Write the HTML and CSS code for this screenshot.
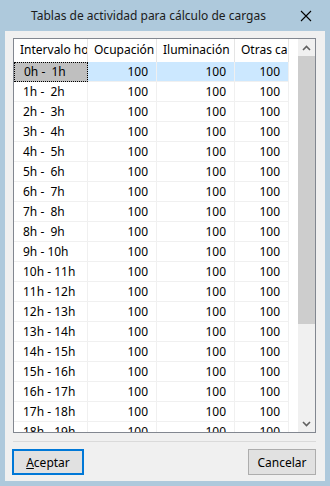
FILE: index.html
```html
<!DOCTYPE html>
<html lang="es">

<head>
    <meta charset="UTF-8">
    <meta name="viewport" content="width=device-width, initial-scale=1.0">
    <title>Tablas de actividad</title>
    <link rel="stylesheet" href="styles.css">
</head>

<body>
    <div class="window">
        <div class="titlebar">
            <span class="title">Tablas de actividad para cálculo de cargas</span>
            <svg class="close" width="12" height="12" viewBox="0 0 12 12">
                <path d="M1 1L11 11M11 1L1 11" stroke="#000" stroke-width="1.1" fill="none" />
            </svg>
        </div>

        <div class="client">
            <div class="grid">
                <div class="table">
                    <div class="row head">
                        <div class="cell">Intervalo horario</div>
                        <div class="cell">Ocupación</div>
                        <div class="cell">Iluminación</div>
                        <div class="cell">Otras cargas</div>
                    </div>
                    <div class="rows">
                        <div class="row selected">
                            <div class="cell focus">0h -  1h</div>
                            <div class="cell num">100</div>
                            <div class="cell num">100</div>
                            <div class="cell num">100</div>
                        </div>
                        <div class="row">
                            <div class="cell">1h -  2h</div>
                            <div class="cell num">100</div>
                            <div class="cell num">100</div>
                            <div class="cell num">100</div>
                        </div>
                        <div class="row">
                            <div class="cell">2h -  3h</div>
                            <div class="cell num">100</div>
                            <div class="cell num">100</div>
                            <div class="cell num">100</div>
                        </div>
                        <div class="row">
                            <div class="cell">3h -  4h</div>
                            <div class="cell num">100</div>
                            <div class="cell num">100</div>
                            <div class="cell num">100</div>
                        </div>
                        <div class="row">
                            <div class="cell">4h -  5h</div>
                            <div class="cell num">100</div>
                            <div class="cell num">100</div>
                            <div class="cell num">100</div>
                        </div>
                        <div class="row">
                            <div class="cell">5h -  6h</div>
                            <div class="cell num">100</div>
                            <div class="cell num">100</div>
                            <div class="cell num">100</div>
                        </div>
                        <div class="row">
                            <div class="cell">6h -  7h</div>
                            <div class="cell num">100</div>
                            <div class="cell num">100</div>
                            <div class="cell num">100</div>
                        </div>
                        <div class="row">
                            <div class="cell">7h -  8h</div>
                            <div class="cell num">100</div>
                            <div class="cell num">100</div>
                            <div class="cell num">100</div>
                        </div>
                        <div class="row">
                            <div class="cell">8h -  9h</div>
                            <div class="cell num">100</div>
                            <div class="cell num">100</div>
                            <div class="cell num">100</div>
                        </div>
                        <div class="row">
                            <div class="cell">9h - 10h</div>
                            <div class="cell num">100</div>
                            <div class="cell num">100</div>
                            <div class="cell num">100</div>
                        </div>
                        <div class="row">
                            <div class="cell">10h - 11h</div>
                            <div class="cell num">100</div>
                            <div class="cell num">100</div>
                            <div class="cell num">100</div>
                        </div>
                        <div class="row">
                            <div class="cell">11h - 12h</div>
                            <div class="cell num">100</div>
                            <div class="cell num">100</div>
                            <div class="cell num">100</div>
                        </div>
                        <div class="row">
                            <div class="cell">12h - 13h</div>
                            <div class="cell num">100</div>
                            <div class="cell num">100</div>
                            <div class="cell num">100</div>
                        </div>
                        <div class="row">
                            <div class="cell">13h - 14h</div>
                            <div class="cell num">100</div>
                            <div class="cell num">100</div>
                            <div class="cell num">100</div>
                        </div>
                        <div class="row">
                            <div class="cell">14h - 15h</div>
                            <div class="cell num">100</div>
                            <div class="cell num">100</div>
                            <div class="cell num">100</div>
                        </div>
                        <div class="row">
                            <div class="cell">15h - 16h</div>
                            <div class="cell num">100</div>
                            <div class="cell num">100</div>
                            <div class="cell num">100</div>
                        </div>
                        <div class="row">
                            <div class="cell">16h - 17h</div>
                            <div class="cell num">100</div>
                            <div class="cell num">100</div>
                            <div class="cell num">100</div>
                        </div>
                        <div class="row">
                            <div class="cell">17h - 18h</div>
                            <div class="cell num">100</div>
                            <div class="cell num">100</div>
                            <div class="cell num">100</div>
                        </div>
                        <div class="row">
                            <div class="cell">18h - 19h</div>
                            <div class="cell num">100</div>
                            <div class="cell num">100</div>
                            <div class="cell num">100</div>
                        </div>
                        <div class="row">
                            <div class="cell">19h - 20h</div>
                            <div class="cell num">100</div>
                            <div class="cell num">100</div>
                            <div class="cell num">100</div>
                        </div>
                    </div>
                </div>

                <!-- barra de desplazamiento -->
                <div class="scroll">
                    <div class="arrow">
                        <svg width="9" height="6" viewBox="0 0 9 6">
                            <path d="M1 5L4.5 1.5L8 5" stroke="#606060" stroke-width="1.6" fill="none" />
                        </svg>
                    </div>
                    <div class="track">
                        <div class="thumb"></div>
                    </div>
                    <div class="arrow">
                        <svg width="9" height="6" viewBox="0 0 9 6">
                            <path d="M1 1L4.5 4.5L8 1" stroke="#606060" stroke-width="1.6" fill="none" />
                        </svg>
                    </div>
                </div>
            </div>

            <div class="buttons">
                <button class="btn default"><u>A</u>ceptar</button>
                <button class="btn">Cancelar</button>
            </div>
        </div>
    </div>
</body>

</html>
```

FILE: styles.css
```css
* {
    margin: 0px;
    padding: 0px;
    box-sizing: border-box;
}

body {
    font-family: "Noto Sans", "Liberation Sans", sans-serif;
    font-size: 12px;
    color: #000;
}
/*
 * ventana
 */

.window {
    width: 330px;
    height: 486px;
    background-color: #aec9dc;
    display: flex;
    flex-direction: column;
    padding: 0 5px 5px 5px;
}

.titlebar {
    height: 31px;
    display: flex;
    align-items: center;
    padding-left: 26px;
    padding-right: 13px;
}

.title {
    flex: 1;
    color: #1b1b1b;
}

.close {
    display: block;
}

.client {
    flex: 1;
    background-color: #f0f0f0;
    display: flex;
    flex-direction: column;
    padding: 7px 9px 0 8px;
}
/*
 * tabla
 */

.grid {
    height: 395px;
    border: 1px solid #828790;
    background-color: #fff;
    display: flex;
}

.table {
    flex: 1;
    overflow: hidden;
}

.row {
    display: grid;
    grid-template-columns: 74px 69px 78px 54px;
    height: 20px;
    line-height: 19px;
}

.row .cell {
    white-space: pre;
    overflow: hidden;
    padding-left: 9px;
    border-right: 1px solid #f0f0f0;
    border-bottom: 1px solid #f0f0f0;
}

.row .num {
    text-align: right;
    padding-left: 0;
    padding-right: 8px;
}

.head {
    height: 23px;
    line-height: 22px;
}

.head .cell {
    padding-left: 6px;
    border-bottom: none;
    border-right: 1px solid #e5e5e5;
}

.rows {
    height: 370px;
    overflow: hidden;
}

.selected .cell {
    background-color: #cce8ff;
}

.selected .focus {
    background-color: #bfbfbf;
    border: 1px dotted #000;
    line-height: 17px;
    padding-left: 9px;
}
/*
 * scroll
 */

.scroll {
    width: 17px;
    background-color: #f0f0f0;
    display: flex;
    flex-direction: column;
}

.arrow {
    height: 17px;
    display: flex;
    align-items: center;
    justify-content: center;
}

.track {
    flex: 1;
}

.thumb {
    height: 268px;
    background-color: #cdcdcd;
}
/*
 * botones
 */

.buttons {
    margin-top: 8px;
    border-top: 1px solid #dadada;
    display: flex;
    justify-content: space-between;
    padding-top: 7px;
}

.btn {
    font-family: "Noto Sans", "Liberation Sans", sans-serif;
    font-size: 12px;
    color: #000;
    height: 26px;
    background-color: #e1e1e1;
    border: 1px solid #adadad;
}

.btn.default {
    width: 72px;
    margin-left: -1px;
    border: 2px solid #0078d7;
}

.btn:not(.default) {
    width: 68px;
}
```
